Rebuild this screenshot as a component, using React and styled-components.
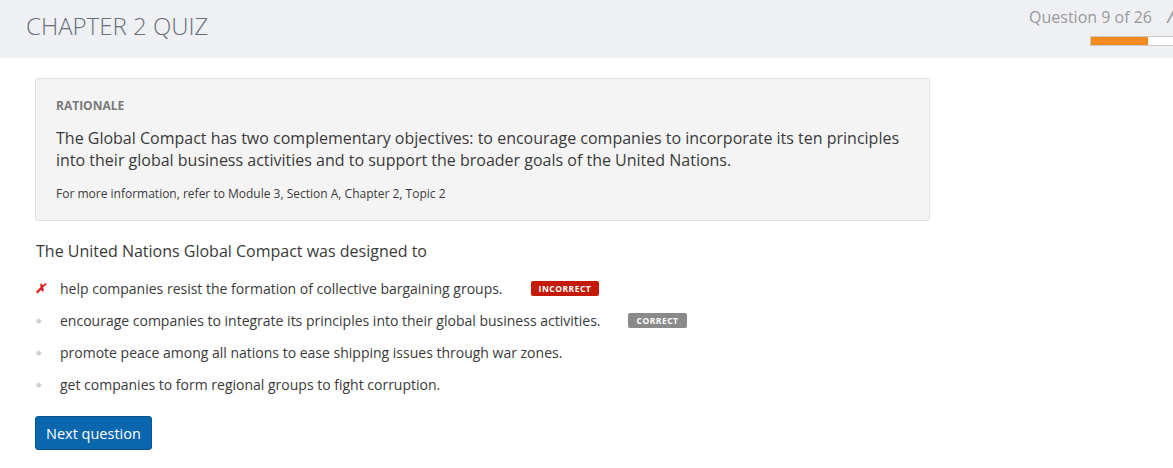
import styled, { createGlobalStyle } from "styled-components";

const GlobalStyle = createGlobalStyle`
  html, body {
    margin: 0;
    padding: 0;
    background: #fff;
    font-family: "Open Sans", "Liberation Sans", sans-serif;
    color: #333;
  }
  * { box-sizing: border-box; }
`;

const Page = styled.div`
  width: 1173px;
  height: 468px;
  overflow: hidden;
`;

const Header = styled.header`
  height: 58px;
  background: #eff0f4;
  display: flex;
  justify-content: space-between;
  align-items: flex-start;
  padding-left: 26px;
  overflow: hidden;
`;

const Title = styled.h1`
  margin: 9px 0 0;
  font-size: 24px;
  font-weight: 300;
  color: #6a6f78;
  line-height: 34px;
`;

const Status = styled.div`
  display: flex;
  align-items: flex-start;
  width: 143px;
  flex-shrink: 0;
  padding-top: 6px;
`;

const Progress = styled.div`
  width: 122px;
  flex-shrink: 0;
  display: flex;
  flex-direction: column;
  align-items: flex-end;
`;

const Counter = styled.span`
  font-size: 16px;
  color: #9a9a9a;
  line-height: 23px;
  white-space: nowrap;
`;

const Slash = styled.span`
  margin-left: 15px;
  font-size: 16px;
  line-height: 23px;
  color: #9a9a9a;
  font-style: italic;
  font-weight: 600;
`;

const Bar = styled.div`
  margin-top: 7px;
  margin-left: 60px;
  align-self: flex-start;
  width: 99px;
  flex-shrink: 0;
  height: 10px;
  border: 1px solid #c8c8c8;
  background: #fff;
  display: flex;
`;

const Fill = styled.div`
  background: #f28b1f;
  height: 100%;
`;

const Content = styled.main`
  padding: 20px 0 0 35px;
  width: 930px;
`;

const Rationale = styled.section`
  background: #f4f4f4;
  border: 1px solid #e1e1e1;
  border-radius: 3px;
  padding: 17px 20px 16px 20px;
`;

const RationaleLabel = styled.div`
  font-size: 12px;
  font-weight: 700;
  color: #7a7a7a;
  line-height: 20px;
`;

const RationaleText = styled.p`
  margin: 11px 0 0;
  font-size: 16px;
  line-height: 22px;
  color: #3a3a3a;
`;

const MoreInfo = styled.p`
  margin: 13px 0 0;
  font-size: 12px;
  line-height: 20px;
  color: #3a3a3a;
`;

const Question = styled.p`
  margin: 18px 0 0 1px;
  font-size: 16px;
  line-height: 24px;
  color: #3a3a3a;
`;

const Options = styled.ul`
  list-style: none;
  margin: 9px 0 0;
  padding: 0;
`;

const Option = styled.li`
  display: flex;
  align-items: center;
  height: 32px;
  font-size: 14px;
  color: #3a3a3a;
`;

const Marker = styled.span`
  width: 25px;
  padding-left: ${(p) => (p.$wrong ? "0px" : "1px")};
  display: flex;
  align-items: center;
  color: ${(p) => (p.$wrong ? "#e0141e" : "#cfcfcf")};
  font-size: ${(p) => (p.$wrong ? "13px" : "7px")};
  font-weight: 700;
  font-style: ${(p) => (p.$wrong ? "italic" : "normal")};
`;

const Badge = styled.span`
  margin-left: ${(p) => p.$gap}px;
  background: ${(p) => (p.$kind === "incorrect" ? "#c51a06" : "#8a8a8a")};
  color: #fff;
  font-size: 8.5px;
  font-weight: 700;
  letter-spacing: 0.5px;
  height: 15px;
  padding: 0 8px;
  border-radius: 2px;
  display: inline-flex;
  align-items: center;
`;

const Button = styled.button`
  margin-top: 16px;
  background: #0a66ad;
  color: #fff;
  border: 1px solid #07548f;
  border-radius: 3px;
  font-family: inherit;
  font-size: 14.5px;
  height: 34px;
  padding: 0 10px;
  cursor: pointer;
`;

const options = [
  { text: "help companies resist the formation of collective bargaining groups.", wrong: true, badge: "incorrect", gap: 28 },
  { text: "encourage companies to integrate its principles into their global business activities.", badge: "correct", gap: 28 },
  { text: "promote peace among all nations to ease shipping issues through war zones." },
  { text: "get companies to form regional groups to fight corruption." },
];

export default function App() {
  return (
    <Page>
      <GlobalStyle />
      <Header>
        <Title>CHAPTER 2 QUIZ</Title>
        <Status>
          <Progress>
            <Counter>Question 9 of 26</Counter>
            <Bar>
              <Fill style={{ width: `${(9 / 26) * 100 * 1.7}%` }} />
            </Bar>
          </Progress>
          <Slash>/</Slash>
        </Status>
      </Header>
      <Content>
        <Rationale>
          <RationaleLabel>RATIONALE</RationaleLabel>
          <RationaleText>
            The Global Compact has two complementary objectives: to encourage companies to incorporate its ten principles
            into their global business activities and to support the broader goals of the United Nations.
          </RationaleText>
          <MoreInfo>For more information, refer to Module 3, Section A, Chapter 2, Topic 2</MoreInfo>
        </Rationale>
        <Question>The United Nations Global Compact was designed to</Question>
        <Options>
          {options.map((o) => (
            <Option key={o.text}>
              <Marker $wrong={o.wrong}>{o.wrong ? "✗" : "◆"}</Marker>
              {o.text}
              {o.badge && (
                <Badge $kind={o.badge} $gap={o.gap}>
                  {o.badge.toUpperCase()}
                </Badge>
              )}
            </Option>
          ))}
        </Options>
        <Button>Next question</Button>
      </Content>
    </Page>
  );
}
